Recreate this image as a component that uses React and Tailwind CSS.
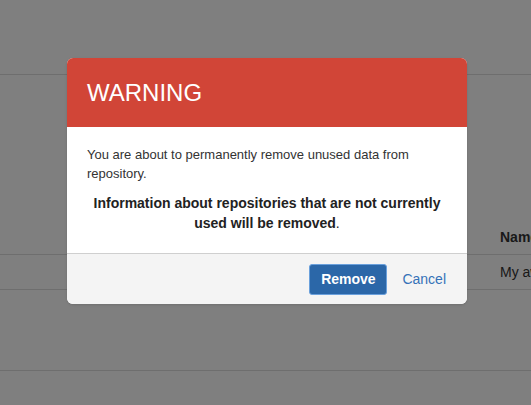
import React from "react";

export default function App() {
  return (
    <div className="relative w-[531px] h-[405px] overflow-hidden bg-white text-[#333] font-['Liberation_Sans',Arial,sans-serif]">
      {/* underlying page */}
      <div className="flex flex-col">
        <div className="h-[75px] border-b border-[#dcdcdc]" />
        <div className="h-[145px]" />
        <div className="h-[35px] flex items-center border-b border-[#dcdcdc] pl-[500px] text-[14px] font-bold text-[#333] whitespace-nowrap">Name</div>
        <div className="h-[35px] flex items-center border-b border-[#dcdcdc] pl-[500px] text-[14px] text-[#333] whitespace-nowrap">My awesome repository</div>
        <div className="h-[81px] border-b border-[#dcdcdc]" />
      </div>

      {/* overlay */}
      <div className="absolute inset-0 bg-black/50 flex items-start justify-center pt-[58px] pl-[3px]">
        {/* modal */}
        <div className="w-[400px] rounded-[6px] overflow-hidden bg-white shadow-sm">
          <div className="h-[69px] bg-[#d14537] px-5 flex items-center">
            <h2 className="text-white text-[24px] leading-none">WARNING</h2>
          </div>
          <div className="px-5 pt-[19px] pb-[20px] text-[13px] leading-[18.5px]">
            <p className="text-[#333]">You are about to permanently remove unused data from repository.</p>
            <p className="mt-[10px] text-center font-bold text-[14px] leading-[20px] text-[#222]">
              Information about repositories that are not currently used will be removed<span className="font-normal">.</span>
            </p>
          </div>
          <div className="border-t border-[#cfcfcf] bg-[#f4f4f4] h-[51px] flex items-center justify-end pr-[21px] gap-[15px]">
            <button className="h-[31px] w-[78px] rounded-[3px] bg-[#2b67a8] border border-[#6aa0dc] text-white font-bold text-[14px]">
              Remove
            </button>
            <a className="text-[14px] text-[#3572b8]">Cancel</a>
          </div>
        </div>
      </div>
    </div>
  );
}
